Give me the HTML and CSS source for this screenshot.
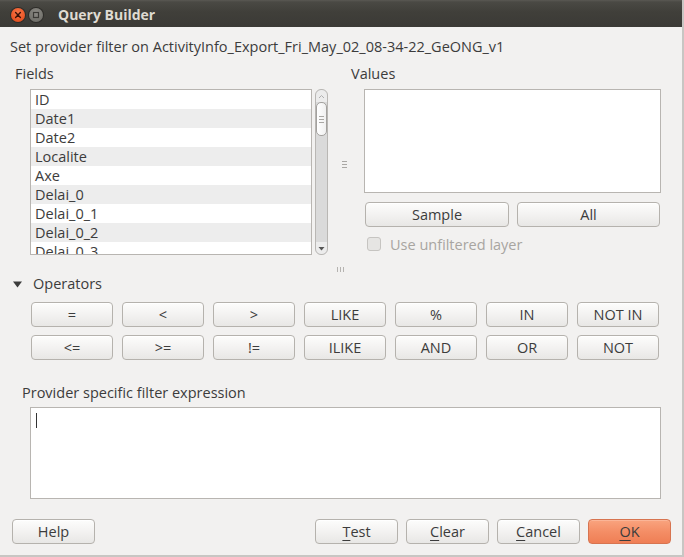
FILE: index.html
```html
<!DOCTYPE html>
<html>
<head>
<meta charset="utf-8">
<title>Query Builder</title>
<link rel="stylesheet" href="styles.css">
</head>
<body>
<div class="window">
  <div class="titlebar">
    <span class="wbtn close"><svg width="14" height="14" viewBox="0 0 14 14"><path d="M4.6 4.6 L9.4 9.4 M9.4 4.6 L4.6 9.4" stroke="#3a1208" stroke-width="1.4" stroke-linecap="round"/></svg></span>
    <span class="wbtn max"><svg width="14" height="14" viewBox="0 0 14 14"><rect x="4.5" y="4.5" width="5" height="5" fill="none" stroke="#3b3a36" stroke-width="1.2"/></svg></span>
    <span class="title">Query Builder</span>
  </div>
  <div class="content">
    <div class="subtitle">Set provider filter on ActivityInfo_Export_Fri_May_02_08-34-22_GeONG_v1</div>
    <div class="top">
      <div class="fields">
        <div class="label">Fields</div>
        <div class="listwrap">
          <div class="list">
            <div class="row">ID</div>
            <div class="row alt">Date1</div>
            <div class="row">Date2</div>
            <div class="row alt">Localite</div>
            <div class="row">Axe</div>
            <div class="row alt">Delai_0</div>
            <div class="row">Delai_0_1</div>
            <div class="row alt">Delai_0_2</div>
            <div class="row">Delai_0_3</div>
          </div>
          <div class="sb">
            <div class="sb-up"><svg width="7" height="5" viewBox="0 0 7 5"><path d="M1 4 L3.5 1.5 L6 4" fill="none" stroke="#b0b0b0" stroke-width="1"/></svg></div>
            <div class="sb-thumb"><span></span><span></span><span></span></div>
            <div class="sb-fill"></div>
            <div class="sb-down"><svg width="7" height="5" viewBox="0 0 7 5"><path d="M0.5 1 L6.5 1 L3.5 4.5 Z" fill="#555"/></svg></div>
          </div>
        </div>
      </div>
      <div class="vhandle"><span></span><span></span><span></span></div>
      <div class="values">
        <div class="label">Values</div>
        <div class="valuebox"></div>
        <div class="valbtns">
          <button class="btn">Sample</button>
          <button class="btn">All</button>
        </div>
        <div class="check"><span class="cbox"></span><span class="ctext">Use unfiltered layer</span></div>
      </div>
    </div>
    <div class="hhandle"><span></span><span></span><span></span></div>
    <div class="ops-head"><svg class="tri" width="9" height="7" viewBox="0 0 9 7"><path d="M0 0.5 L9 0.5 L4.5 6.5 Z" fill="#3c3c3c"/></svg><span>Operators</span></div>
    <div class="ops">
      <button class="btn op">=</button>
      <button class="btn op">&lt;</button>
      <button class="btn op">&gt;</button>
      <button class="btn op">LIKE</button>
      <button class="btn op">%</button>
      <button class="btn op">IN</button>
      <button class="btn op">NOT IN</button>
      <button class="btn op">&lt;=</button>
      <button class="btn op">&gt;=</button>
      <button class="btn op">!=</button>
      <button class="btn op">ILIKE</button>
      <button class="btn op">AND</button>
      <button class="btn op">OR</button>
      <button class="btn op">NOT</button>
    </div>
    <div class="label provider">Provider specific filter expression</div>
    <div class="expr"><span class="caret"></span></div>
    <div class="footer">
      <button class="btn fbtn">Help</button>
      <div class="spacer"></div>
      <button class="btn fbtn"><u>T</u>est</button>
      <button class="btn fbtn"><u>C</u>lear</button>
      <button class="btn fbtn"><u>C</u>ancel</button>
      <button class="btn fbtn ok"><u>O</u>K</button>
    </div>
  </div>
</div>
</body>
</html>
```
FILE: styles.css
```css
* { box-sizing: border-box; }
html, body { margin: 0; padding: 0; }
body {
  background: #f2f1f0;
  font-family: "Open Sans", "Noto Sans", sans-serif;
  font-size: 14.5px;
  color: #3c3c3c;
}
.window {
  width: 684px;
  height: 557px;
  display: flex;
  flex-direction: column;
  background: #f2f1f0;
  border-right: 2px solid #c8c6c3;
  border-bottom: 2px solid #c8c6c3;
  overflow: hidden;
}
.titlebar {
  height: 27px;
  flex: none;
  display: flex;
  align-items: center;
  background: linear-gradient(to bottom, #5a5853 0, #4a4944 2px, #403f3a 12px, #3b3a36 100%);
  padding-left: 11px;
}
.wbtn {
  width: 14px;
  height: 14px;
  border-radius: 50%;
  display: flex;
  margin-top: 2px;
}
.close {
  background: radial-gradient(circle at 50% 35%, #f7774a 0, #ee5a2a 55%, #d24516 100%);
  box-shadow: 0 0 0 1px #2d2c29;
}
.max {
  margin-left: 4px;
  background: radial-gradient(circle at 50% 35%, #8d8b86 0, #76756f 60%, #62615c 100%);
  box-shadow: 0 0 0 1px #2d2c29;
}
.title {
  margin-left: 15px;
  margin-top: 1px;
  color: #dfdbd2;
  font-weight: bold;
  font-size: 14px;
}
.content {
  flex: 1;
  display: flex;
  flex-direction: column;
}
.subtitle {
  margin: 11px 0 0 10px;
  line-height: 18px;
  height: 18px;
  white-space: nowrap;
}
.label {
  line-height: 18px;
  height: 18px;
}
.top {
  display: flex;
  margin-top: 9px;
  height: 190px;
  flex: none;
}
.fields {
  width: 322px;
  margin-left: 15px;
  display: flex;
  flex-direction: column;
}
.listwrap {
  display: flex;
  margin-top: 6px;
  margin-left: 15px;
  gap: 3px;
}
.list {
  width: 282px;
  height: 166px;
  border: 1px solid #b8b5b1;
  background: #fff;
  overflow: hidden;
}
.row {
  height: 19px;
  line-height: 19px;
  padding-left: 4px;
}
.row.alt { background: #ededed; }
.sb {
  width: 13px;
  height: 166px;
  border: 1px solid #b9b7b4;
  border-radius: 6px;
  background: #dadada;
  display: flex;
  flex-direction: column;
  overflow: hidden;
}
.sb-up, .sb-down {
  height: 12px;
  flex: none;
  display: flex;
  align-items: center;
  justify-content: center;
  background: #ececec;
}
.sb-up { border-radius: 6px 6px 0 0; }
.sb-down { border-radius: 0 0 6px 6px; }
.sb-thumb {
  height: 34px;
  flex: none;
  border: 1px solid #a3a19e;
  border-radius: 5px;
  background: linear-gradient(to right, #ffffff, #f0f0f0);
  display: flex;
  flex-direction: column;
  align-items: center;
  justify-content: center;
  gap: 2px;
}
.sb-thumb span, .vhandle span {
  width: 5px;
  height: 1px;
  background: #a9a7a4;
}
.sb-fill { flex: 1; }
.vhandle {
  width: 14px;
  display: flex;
  flex-direction: column;
  align-items: center;
  gap: 2px;
  padding-top: 96px;
}
.values {
  display: flex;
  flex-direction: column;
}
.valuebox {
  margin: 6px 0 0 13px;
  width: 297px;
  height: 104px;
  border: 1px solid #b8b5b1;
  background: #fff;
}
.valbtns {
  display: flex;
  gap: 8px;
  margin: 9px 0 0 14px;
}
.btn {
  font-family: inherit;
  font-size: 14.5px;
  color: #3c3c3c;
  height: 25px;
  padding: 0;
  border: 1px solid #b5b2ad;
  border-radius: 4px;
  background: linear-gradient(to bottom, #fdfdfc 0, #f3f2f1 50%, #e8e7e5 100%);
  box-shadow: inset 0 1px 0 #ffffff;
  white-space: nowrap;
}
.valbtns .btn { width: 144px; }
.valbtns .btn + .btn { width: 143px; }
.check {
  display: flex;
  align-items: center;
  margin: 8px 0 0 16px;
  height: 18px;
}
.cbox {
  width: 14px;
  height: 14px;
  border: 1px solid #c6c4c1;
  border-radius: 3px;
  background: #e6e5e3;
}
.ctext {
  margin-left: 9px;
  color: #a8a5a1;
}
.hhandle {
  display: flex;
  justify-content: center;
  gap: 2px;
  height: 7px;
  margin: 12px 0 0 -2px;
  flex: none;
}
.hhandle span {
  width: 1px;
  height: 5px;
  background: #b5b3b0;
}
.ops-head {
  display: flex;
  align-items: center;
  margin: 1px 0 0 13px;
  height: 18px;
  line-height: 18px;
}
.ops-head .tri { margin-right: 11px; }
.ops {
  display: grid;
  grid-template-columns: repeat(7, 82px);
  column-gap: 9px;
  row-gap: 8px;
  margin: 9px 0 0 31px;
}
.op { width: 82px; }
.provider {
  margin: 24px 0 0 22px;
}
.expr {
  margin: 5px 0 0 30px;
  width: 631px;
  height: 92px;
  border: 1px solid #b8b5b1;
  background: #fff;
  padding: 5px 0 0 5px;
  flex: none;
}
.caret {
  display: block;
  width: 1px;
  height: 15px;
  background: #333;
}
.footer {
  display: flex;
  gap: 8px;
  margin: 20px 0 0 12px;
  width: 659px;
}
.spacer { flex: 1; }
.fbtn { width: 83px; }
.fbtn u { text-decoration-thickness: 1px; text-underline-offset: 3px; }
.ok {
  background: linear-gradient(to bottom, #f9a47f 0, #f48e66 50%, #ef7e55 100%);
  border-color: #d77450;
  box-shadow: inset 0 1px 0 #fbb597;
}
```
